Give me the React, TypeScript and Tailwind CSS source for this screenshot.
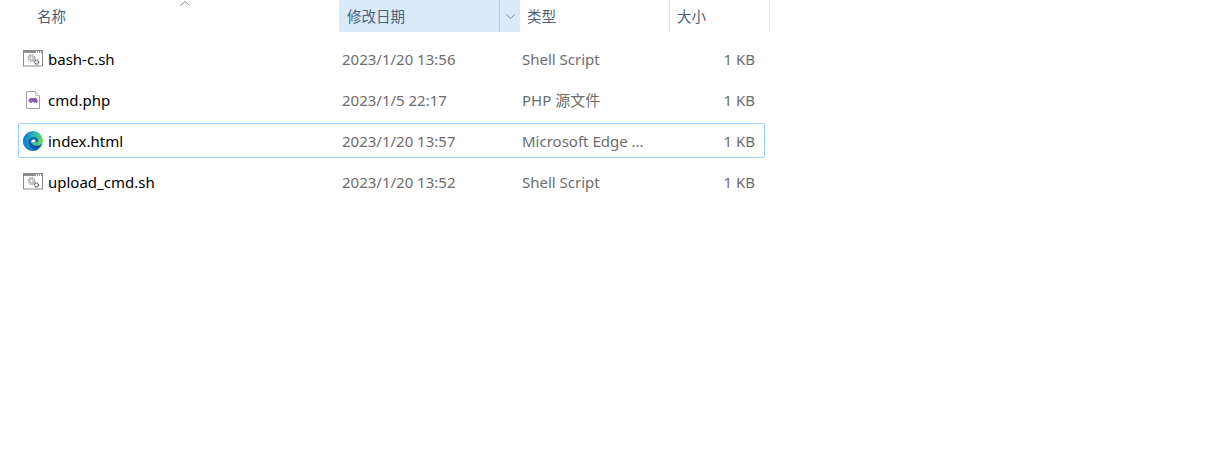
import React from "react";

const font = "font-['Noto_Sans','Noto_Sans_CJK_SC',sans-serif]";

function ShellIcon() {
  return (
    <svg width="20" height="18" viewBox="0 0 20 18" className="block">
      <rect x="0.5" y="0.5" width="19" height="15.5" fill="#fff" stroke="#8a8a8a" />
      <rect x="1" y="1" width="18" height="2" fill="#8f8f8f" />
      <rect x="13" y="1" width="1" height="2" fill="#fff" />
      <rect x="15" y="1" width="1" height="2" fill="#fff" />
      <rect x="17" y="1" width="1" height="2" fill="#fff" />
      <circle cx="8.5" cy="8" r="3" fill="none" stroke="#a9a9a9" strokeWidth="2" strokeDasharray="1.6 0.7" />
      <circle cx="8.5" cy="8" r="2.6" fill="#c4c4c4" />
      <circle cx="8.5" cy="8" r="1" fill="#fff" />
      <circle cx="13.5" cy="12" r="2" fill="none" stroke="#6b6b6b" strokeWidth="1.5" strokeDasharray="1.2 0.5" />
      <circle cx="13.5" cy="12" r="0.7" fill="#fff" />
    </svg>
  );
}

function PhpIcon() {
  return (
    <svg width="14" height="18" viewBox="0 0 14 18" className="block">
      <path d="M0.5 0.5H9.5L13.5 4.5V17.5H0.5Z" fill="#fff" stroke="#a3a3a3" />
      <path d="M9.5 0.5V4.5H13.5" fill="#f0f0f0" stroke="#c4c4c4" />
      <path
        d="M2.5 9.2C2.8 7.4 4.4 7 6 7H9.2C10.6 7 11.6 8 11.7 9.4C11.8 10.4 11.7 11.3 11.2 12H10V10.9H9.2V12H7.6V11H5.7V12H4.1V10.5C3.5 10.4 3.4 10.9 3.4 11.5L2.6 11C2.4 10.3 2.4 9.8 2.5 9.2Z"
        fill="#8a63ad"
      />
    </svg>
  );
}

function EdgeIcon() {
  return (
    <svg width="20" height="20" viewBox="0 0 20 20" className="block">
      <defs>
        <linearGradient id="edgeTop" x1="0" y1="0.2" x2="1" y2="0.6">
          <stop offset="0" stopColor="#0f7fc8" />
          <stop offset="0.5" stopColor="#2fb6b0" />
          <stop offset="1" stopColor="#6ede5a" />
        </linearGradient>
        <linearGradient id="edgeLow" x1="0" y1="0" x2="1" y2="1">
          <stop offset="0" stopColor="#0c68b8" />
          <stop offset="1" stopColor="#0a4d96" />
        </linearGradient>
      </defs>
      <circle cx="10" cy="10" r="10" fill="url(#edgeTop)" />
      <path
        d="M0 10C0 5.5 3.6 3.6 6.8 4.2C3.6 5.6 2.8 9 4 12.5C5.2 16.2 9 19 13.6 19.3C12.5 19.8 11.2 20 10 20C4.5 20 0 15.5 0 10Z"
        fill="#0e86d4"
      />
      <path
        d="M5.2 10.6C5.2 7.6 7.6 5.9 10.3 5.9C13.2 5.9 15.2 7.5 15.2 9.4C15.2 10.4 14.7 11 14 11.2H9C8.4 11.2 8.2 11.5 8.5 12.1C9.3 13.8 11.4 14.8 13.6 14.8C15.4 14.8 17.4 14 18.9 12.6C18.2 15 16.4 17.6 14 18.9C9.3 20.3 5.2 15.6 5.2 10.6Z"
        fill="url(#edgeLow)"
      />
      <path
        d="M8 11.4C8.1 9.9 9 8.8 10.3 8.5C11.6 8.2 12.5 9 12.6 9.7C12.7 10.4 12.4 10.9 11.9 11.2H8.9Z"
        fill="#fff"
      />
      <path d="M14.5 11.2H20V12.5C18 14.2 15.4 15 13.4 14.8C11.4 14.6 9.6 13.6 8.7 12.2C8.2 11.4 8.5 11.2 9 11.2Z" fill="#2a9fdc" opacity="0" />
    </svg>
  );
}

const rows = [
  { name: "bash-c.sh", date: "2023/1/20 13:56", type: "Shell Script", icon: <ShellIcon /> },
  { name: "cmd.php", date: "2023/1/5 22:17", type: "PHP 源文件", icon: <PhpIcon /> },
  { name: "index.html", date: "2023/1/20 13:57", type: "Microsoft Edge ...", icon: <EdgeIcon />, selected: true },
  { name: "upload_cmd.sh", date: "2023/1/20 13:52", type: "Shell Script", icon: <ShellIcon /> },
];

export default function App() {
  return (
    <div className={`${font} w-[1206px] h-[457px] bg-white overflow-hidden text-[15px] leading-[20px]`}>
      <div className="flex h-8 w-[770px] text-[#4c607a] text-[14.5px]">
        <div className="relative w-[339px] pl-[37px] flex items-center">
          <span>名称</span>
          <svg width="10" height="5" viewBox="0 0 10 5" className="absolute left-[180px] top-[1px]">
            <path d="M0.5 4.5L5 0.5L9.5 4.5" fill="none" stroke="#8c8c8c" />
          </svg>
        </div>
        <div className="flex w-[181px] bg-[#d9ebf9]">
          <div className="w-[161px] pl-2 flex items-center border-r border-[#b8cfe3]">修改日期</div>
          <div className="flex-1 flex items-center justify-center">
            <svg width="9" height="5" viewBox="0 0 9 5">
              <path d="M0.5 0.5L4.5 4.5L8.5 0.5" fill="none" stroke="#7f8fa3" />
            </svg>
          </div>
        </div>
        <div className="w-[150px] pl-[7px] flex items-center border-r border-[#e5e5e5]">类型</div>
        <div className="w-[100px] pl-[7px] flex items-center border-r border-[#e5e5e5]">大小</div>
      </div>
      <div className="mt-[9px] ml-[18px] w-[747px] flex flex-col gap-[6px]">
        {rows.map((r) => (
          <div
            key={r.name}
            className={`flex items-center h-[35px] rounded-[2px] border ${
              r.selected ? "border-[#99d1ff]" : "border-transparent"
            }`}
          >
            <div className="w-[20px] ml-[4px] flex justify-center shrink-0">{r.icon}</div>
            <div className="w-[299px] pl-[5px] text-black">{r.name}</div>
            <div className="w-[180px] text-[#6d6d6d]">{r.date}</div>
            <div className="w-[150px] text-[#6d6d6d]">{r.type}</div>
            <div className="w-[83px] text-right text-[#6d6d6d]">1 KB</div>
          </div>
        ))}
      </div>
    </div>
  );
}
